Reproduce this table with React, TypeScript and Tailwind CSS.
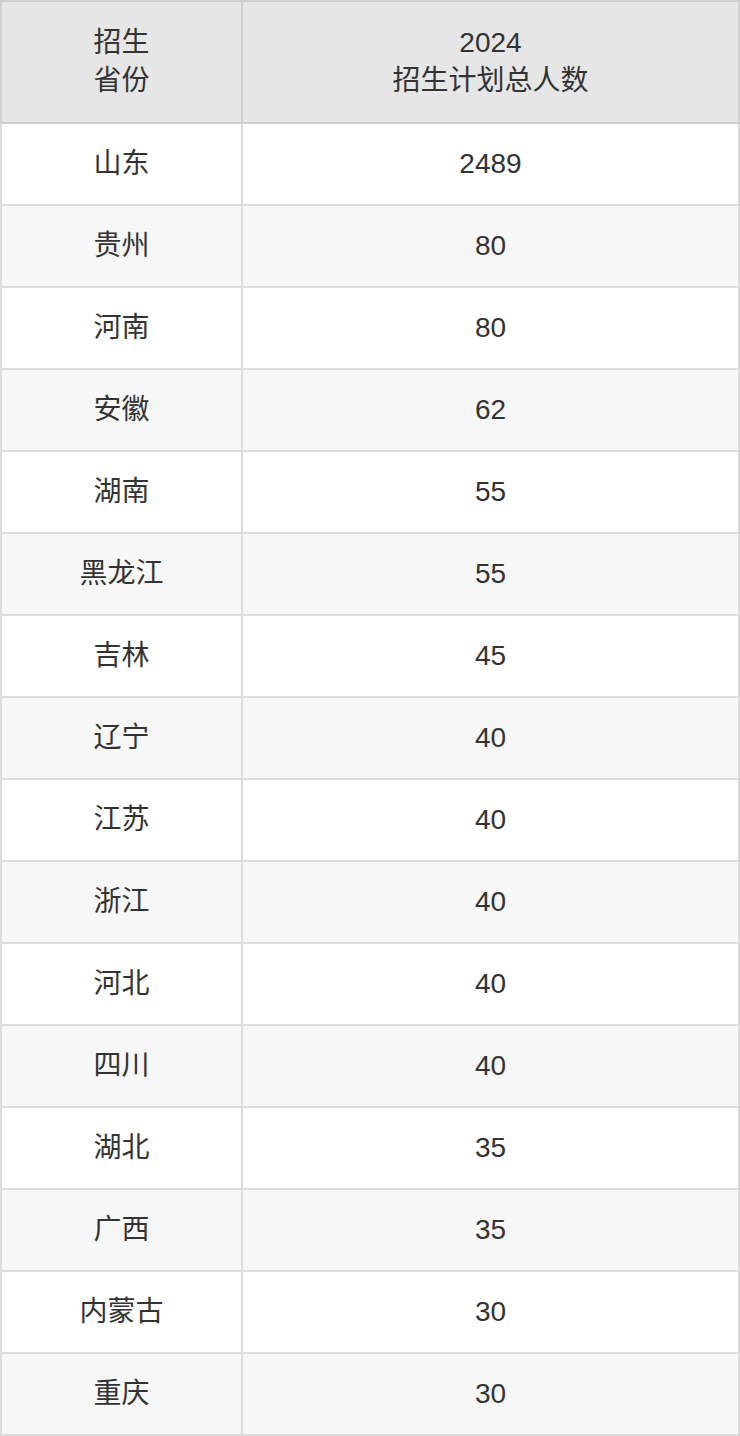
const rows: [string, number][] = [
  ["山东", 2489],
  ["贵州", 80],
  ["河南", 80],
  ["安徽", 62],
  ["湖南", 55],
  ["黑龙江", 55],
  ["吉林", 45],
  ["辽宁", 40],
  ["江苏", 40],
  ["浙江", 40],
  ["河北", 40],
  ["四川", 40],
  ["湖北", 35],
  ["广西", 35],
  ["内蒙古", 30],
  ["重庆", 30],
];

export default function App() {
  return (
    <div className="w-[740px] bg-white font-['Liberation_Sans','Noto_Sans_CJK_SC',sans-serif] text-[28px] text-[#333333]">
      <table className="w-[740px] table-fixed border-collapse">
        <colgroup>
          <col className="w-[241px]" />
          <col />
        </colgroup>
        <thead>
          <tr className="h-[122px] bg-[#e6e6e6]">
            <th className="border-2 border-[#cfcfcf] text-center font-normal leading-[38px]">
              招生
              <br />
              省份
            </th>
            <th className="border-2 border-[#cfcfcf] text-center font-normal leading-[38px]">
              2024
              <br />
              招生计划总人数
            </th>
          </tr>
        </thead>
        <tbody>
          {rows.map(([prov, num], i) => (
            <tr key={prov} className={i % 2 === 0 ? "h-[82px] bg-white" : "h-[82px] bg-[#f7f7f7]"}>
              <td className="border-2 border-[#dcdcdc] text-center">{prov}</td>
              <td className="border-2 border-[#dcdcdc] text-center">{num}</td>
            </tr>
          ))}
        </tbody>
      </table>
    </div>
  );
}
